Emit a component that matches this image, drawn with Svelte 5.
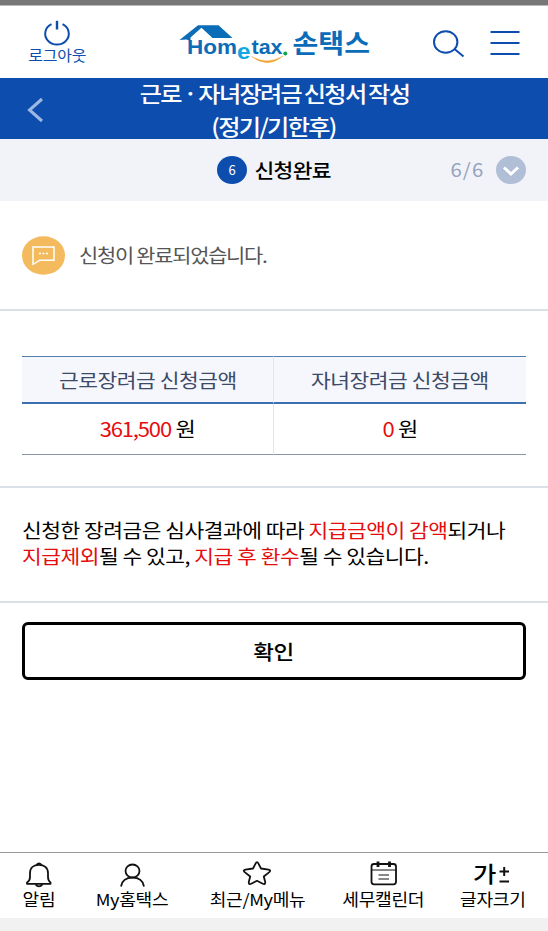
<script>
  const title = ['근로 · 자녀장려금 신청서 작성', '(정기/기한후)'];

  const amounts = [
    { label: '근로장려금 신청금액', value: '361,500' },
    { label: '자녀장려금 신청금액', value: '0' }
  ];

  const tabs = [
    { icon: 'bell', label: '알림', width: 77 },
    { icon: 'user', label: 'My홈택스', width: 110 },
    { icon: 'star', label: '최근/My메뉴', width: 142 },
    { icon: 'calendar', label: '세무캘린더', width: 109 },
    { icon: 'size', label: '글자크기', width: 110 }
  ];
</script>

<div class="page">
  <div class="status-bar"></div>

  <header class="header">
    <button class="logout">
      <svg width="28" height="26" viewBox="0 0 28 26">
        <path d="M8.500 4.200A11.800 10.800 0 1 0 19.500 4.200" />
        <path d="M14 .8V9.500" stroke-width="2.400" />
      </svg>
      <span class="wide">로그아웃</span>
    </button>

    <svg class="logo" width="196" height="44" viewBox="0 0 196 44">
      <path d="M1.500 16L20 1.200H40.500L54.500 14H34.500L23.500 3.800L12.500 13.500V17L8.500 15.500Z" fill="#0b6cb7" />
      <text x="9" y="29.500" font-size="20.500" textLength="50" lengthAdjust="spacingAndGlyphs">Hom</text>
      <text x="59" y="34.500" font-size="21.500" class="sky" textLength="13.500" lengthAdjust="spacingAndGlyphs">e</text>
      <text x="73.500" y="29.500" font-size="20" textLength="31" lengthAdjust="spacingAndGlyphs">tax</text>
      <circle cx="107.300" cy="29.500" r="2" fill="#14a44a" />
      <path d="M73.500 32.500Q89 41.500 105 32Q90 45 73.500 32.500Z" fill="#f0a431" stroke="#f0a431" stroke-width=".4" />
      <text x="114.500" y="28.500" font-size="26" class="korean" textLength="77.500" lengthAdjust="spacingAndGlyphs">손택스</text>
    </svg>

    <svg class="search" width="32" height="28" viewBox="0 0 32 28">
      <ellipse cx="12.700" cy="12" rx="11.700" ry="10.800" />
      <path d="M21.500 19L30.500 26.500" />
    </svg>
    <svg class="menu" width="30" height="26" viewBox="0 0 30 26">
      <path d="M.5 2H29.500M.5 13H29.500M.5 24H29.500" />
    </svg>
  </header>

  <div class="title-bar">
    <svg class="back" width="17" height="26" viewBox="0 0 17 26">
      <path d="M15 2L2.500 13L15 24" />
    </svg>
    <h1>
      {#each title as line}
        <span class="wide">{line}</span>
      {/each}
    </h1>
  </div>

  <div class="step">
    <span class="step-number">6</span>
    <strong class="wide">신청완료</strong>
    <div class="progress">
      <span class="wide">6/6</span>
      <svg width="30" height="28" viewBox="0 0 30 28">
        <ellipse cx="15" cy="14" rx="15" ry="14" fill="#b0bfd6" />
        <path d="M8 11.500L15 18L22 11.500" fill="none" stroke="#fff" stroke-width="3" />
      </svg>
    </div>
  </div>

  <section class="message">
    <svg width="43" height="39" viewBox="0 0 43 39">
      <ellipse cx="21.500" cy="19.500" rx="21.500" ry="19.300" fill="#f4bb5e" />
      <path d="M11 11H32V24.200H18L11 28.300Z" fill="none" stroke="#fff" stroke-width="1.500" />
      <path d="M17 17.500H19M20.500 17.500H22.500M24 17.500H26" stroke="#fff" stroke-width="1.600" />
    </svg>
    <span class="wide">신청이 완료되었습니다.</span>
  </section>

  <section class="amounts">
    <table>
      <thead>
        <tr>
          {#each amounts as item}
            <th><span class="wide">{item.label}</span></th>
          {/each}
        </tr>
      </thead>
      <tbody>
        <tr>
          {#each amounts as item}
            <td><span class="wide"><em>{item.value}</em> 원</span></td>
          {/each}
        </tr>
      </tbody>
    </table>
  </section>

  <section class="notice">
    <p class="wide">신청한 장려금은 심사결과에 따라 <em>지급금액이 감액</em>되거나</p>
    <p class="wide"><em>지급제외</em>될 수 있고, <em>지급 후 환수</em>될 수 있습니다.</p>
  </section>

  <button class="confirm"><span class="wide">확인</span></button>

  <nav class="tabs">
    {#each tabs as tab}
      <a href="#{tab.icon}" style="width: {tab.width}px">
        <svg width="40" height="28" viewBox="0 0 40 28">
          {#if tab.icon === 'bell'}
            <path d="M8 23.800H31.500V22.500C29.500 21 29 19.500 29 17V13C29 7.500 25 4.800 20 4.800S11 7.500 11 13V17C11 19.500 10.500 21 8 22.500Z" />
            <path d="M17.500 4.800Q20 1.800 22.500 4.800M16.500 24.300Q20 28.500 23.500 24.300" />
          {:else if tab.icon === 'user'}
            <ellipse cx="20.500" cy="11" rx="7" ry="6.500" />
            <path d="M9 26.500C10 20.500 14.500 17.700 20.500 17.700S31 20.500 32 26.500" />
          {:else if tab.icon === 'star'}
            <path d="M17.700 3.300Q19 1 20.300 3.300L23 8.500L30.500 9.600Q33.300 10.200 31.300 12.100L25.800 16.500L27.200 22Q27.500 25 24.800 23.700L19 20.800L13.200 23.700Q10.500 25 10.800 22L12.200 16.500L6.700 12.100Q4.700 10.200 7.500 9.600L15 8.500Z" />
          {:else if tab.icon === 'calendar'}
            <rect x="7.500" y="4" width="24.500" height="20.300" rx="2.500" />
            <path d="M7.500 10H32M14.500 15H25M14.500 19H25" stroke-width="1" />
            <path d="M14 1.500V7M25.500 1.500V7" stroke-width="2.800" />
          {:else}
            <text x="0" y="22" textLength="23" lengthAdjust="spacingAndGlyphs">가</text>
            <path d="M26.500 11.500H36M31.200 7V16M26.500 21.500H36" stroke-width="2" />
          {/if}
        </svg>
        <span class="wide">{tab.label}</span>
      </a>
    {/each}
  </nav>
</div>

<style>
  :global(body) {
    margin: 0;
    background: #f1f1f1;
  }

  .page {
    width: 548px;
    height: 918px;
    display: flex;
    flex-direction: column;
    background: #fff;
    font-family: "Noto Sans CJK KR", sans-serif;
    color: #000;
  }

  button {
    padding: 0;
    border: 0;
    background: none;
    font-family: inherit;
    color: inherit;
  }

  em {
    font-style: normal;
    color: #e50d0d;
  }

  /* letters are a little wider than the font draws them */
  .wide {
    display: inline-block;
    white-space: nowrap;
    transform: scaleX(1.1);
  }

  .status-bar {
    height: 5px;
    background: #777;
    border-bottom: 1px solid #bbb;
  }

  .header {
    height: 72px;
    box-sizing: border-box;
    display: flex;
    align-items: flex-start;
    padding: 14px 28px 0 28px;
  }

  .header svg:not(.logo) {
    fill: none;
    stroke: #0d4dad;
    stroke-width: 2;
  }

  .logout {
    width: 58px;
    display: flex;
    flex-direction: column;
    align-items: center;
    font-size: 14.5px;
    line-height: 18px;
    letter-spacing: -.2px;
    color: #0d4dad;
  }

  .logo {
    margin: 4px 0 0 92px;
    fill: #0b6cb7;
    font-family: "Liberation Sans", sans-serif;
    font-weight: 700;
  }

  .logo .sky {
    fill: #12a7e0;
  }

  .logo .korean {
    font-family: "Noto Sans CJK KR", sans-serif;
  }

  .search {
    margin: 10px 0 0 59px;
  }

  .menu {
    margin: 10px 0 0 25px;
  }

  .title-bar {
    height: 61px;
    display: flex;
    align-items: center;
    background: #0d4dad;
    color: #fff;
  }

  .back {
    margin: 2px 0 0 27px;
    fill: none;
    stroke: #9db8e3;
    stroke-width: 3;
  }

  h1 {
    flex: 1;
    margin: 0 44px 0 0;
    display: flex;
    flex-direction: column;
    align-items: center;
    font-size: 22px;
    font-weight: 500;
    line-height: 33px;
    letter-spacing: -1.55px;
    word-spacing: -1px;
  }

  .step {
    height: 62px;
    display: flex;
    align-items: center;
    padding: 0 22px 0 217px;
    background: #f2f3f9;
  }

  .step-number {
    width: 30px;
    height: 28px;
    border-radius: 50%;
    background: #0d4dad;
    color: #fff;
    font-size: 13px;
    line-height: 28px;
    text-align: center;
  }

  .step strong {
    margin: -2px 0 0 11px;
    font-size: 19.5px;
    font-weight: 500;
    letter-spacing: -.6px;
  }

  .progress {
    margin-left: auto;
    display: flex;
    align-items: center;
    gap: 13px;
    font-size: 18.5px;
    letter-spacing: 1px;
    color: #94a4bd;
  }

  .progress .wide {
    margin-top: -3px;
  }

  .message {
    height: 108px;
    display: flex;
    align-items: center;
    gap: 14px;
    padding-left: 22px;
    border-bottom: 2px solid #dadfe8;
    font-size: 19px;
    letter-spacing: -1.15px;
    color: #555;
  }

  .message .wide {
    margin-top: -1px;
    transform-origin: left;
  }

  .amounts {
    padding: 45px 22px 31px;
    border-bottom: 2px solid #dadfe8;
  }

  table {
    width: 504px;
    border-collapse: separate;
    border-spacing: 0;
    table-layout: fixed;
  }

  th,
  td {
    padding: 0;
    text-align: center;
    font-size: 19.5px;
    letter-spacing: -.4px;
    line-height: 24px;
  }

  th {
    height: 45px;
    border-top: 1px solid #5480ad;
    border-bottom: 2px solid #3a6fb0;
    background: #f5f7fc;
    color: #3c4a67;
    font-weight: 400;
  }

  td {
    height: 50px;
    border-bottom: 1px solid #8a96a5;
    font-size: 20px;
  }

  td em {
    letter-spacing: -1.05px;
  }

  th:first-child,
  td:first-child {
    border-right: 1px solid #e2e6ec;
  }

  .notice {
    height: 115px;
    box-sizing: border-box;
    padding: 29px 22px 0;
    border-bottom: 2px solid #dadfe8;
    font-size: 19.5px;
    line-height: 26px;
    letter-spacing: -.45px;
  }

  .notice p {
    display: table;
    margin: 0;
    transform-origin: left;
  }

  .confirm {
    height: 58px;
    margin: 19px 22px 0;
    border: 3px solid #000;
    border-radius: 6px;
    font-size: 20.5px;
    font-weight: 500;
    letter-spacing: -.3px;
  }

  .tabs {
    height: 65px;
    margin-top: auto;
    display: flex;
    border-top: 1px solid #999;
  }

  .tabs a {
    display: flex;
    flex-direction: column;
    align-items: center;
    padding-top: 7px;
    color: #000;
    font-size: 16.5px;
    line-height: 23px;
    text-decoration: none;
    letter-spacing: -.3px;
  }

  .tabs svg {
    overflow: visible;
    flex: none;
    fill: none;
    stroke: #111;
    stroke-width: 1.8;
    stroke-linejoin: round;
  }

  .tabs text {
    fill: #000;
    stroke: none;
    font-size: 22px;
    font-weight: 500;
  }
</style>
